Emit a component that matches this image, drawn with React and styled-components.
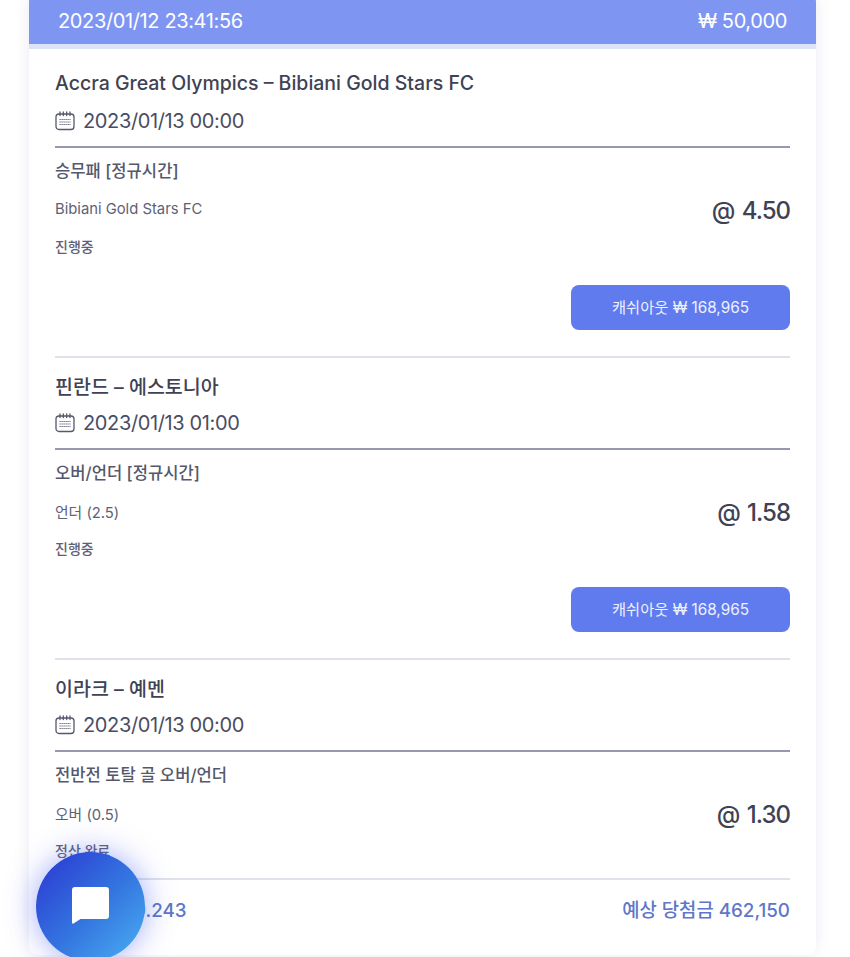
import React from 'react';
import styled, { createGlobalStyle } from 'styled-components';

const GlobalStyle = createGlobalStyle`
    html, body {
        margin: 0;
        height: 957px;
        overflow: hidden;
        background: #fff;
        font-family: Inter, "Noto Sans CJK KR", sans-serif;
        color: #3f4254;
    }
`;

const Page = styled.div`
    box-sizing: border-box;
    height: 957px;
    padding: 0 34px 0 29px;
    overflow: hidden;
`;

const Card = styled.section`
    margin-top: -6px;
    height: 961px;
    box-sizing: border-box;
    background: #fff;
    border-radius: 8px;
    box-shadow: 0 0 16px rgba(60, 70, 130, 0.1);
    overflow: hidden;
    display: flex;
    flex-direction: column;
`;

const Header = styled.header`
    flex: none;
    height: 42px;
    padding: 6px 29px 2px;
    display: flex;
    align-items: center;
    justify-content: space-between;
    background: #7e96f2;
    border-bottom: 5px solid #dde3f6;
    color: #fff;
    font-size: 20px;
    letter-spacing: -0.37px;
    line-height: 1;
`;

const Body = styled.div`
    flex: 1;
    padding: 7px 26px 0;
    display: flex;
    flex-direction: column;
`;

const Bet = styled.article`
    display: flex;
    flex-direction: column;
    border-bottom: 2px solid #dfe1ec;
    height: ${p => p.$height}px;
    box-sizing: border-box;
`;

const Title = styled.h3`
    margin: 0;
    height: 54px;
    display: flex;
    align-items: center;
    font-size: 19.5px;
    font-weight: 500;
    color: #3f4254;
`;

const DateRow = styled.div`
    height: 22px;
    padding-bottom: 14px;
    display: flex;
    align-items: center;
    gap: 8px;
    font-size: 20px;
    letter-spacing: -0.37px;
    color: #4a4d62;
    border-bottom: 2px solid #9698ae;
`;

const Market = styled.div`
    height: 44px;
    display: flex;
    align-items: center;
    font-size: 16.6px;
    font-weight: 500;
    color: #55586c;
`;

const PickRow = styled.div`
    height: 34px;
    display: flex;
    align-items: center;
    justify-content: space-between;
    font-size: 14.8px;
    color: #5e6175;
`;

const Odds = styled.span`
    font-size: 24px;
    font-weight: 500;
    letter-spacing: -1px;
    word-spacing: 2px;
    padding-top: 2px;
    color: #3f4254;
`;

const Status = styled.div`
    height: 40px;
    display: flex;
    align-items: center;
    font-size: 14px;
    font-weight: 500;
    color: #5e6175;
`;

const Actions = styled.div`
    margin-top: 19px;
    display: flex;
    justify-content: flex-end;
`;

const CashOut = styled.button`
    width: 219px;
    height: 45px;
    padding: 0 0 3px;
    border: 0;
    border-radius: 8px;
    background: #5f7bee;
    color: #eef1ff;
    font-family: inherit;
    font-size: 15.3px;
`;

const Footer = styled.footer`
    display: flex;
    align-items: center;
    justify-content: space-between;
    height: 57px;
    padding-bottom: 3px;
    font-size: 18.8px;
    font-weight: 500;
    color: #5f76c9;
`;

const ChatButton = styled.button`
    position: fixed;
    left: 36px;
    top: 852px;
    width: 109px;
    height: 109px;
    padding: 0;
    border: 0;
    border-radius: 50%;
    background: linear-gradient(135deg, #2a35d2 0%, #3477e0 55%, #4bb0f2 100%);
    box-shadow: 0 0 30px rgba(70, 90, 240, 0.5);
    display: flex;
    align-items: center;
    justify-content: center;
`;

const CalendarIcon = () => (
    <svg width="20" height="20" viewBox="0 0 20 20" fill="none" stroke="#55586c" strokeWidth="1.3" strokeLinecap="round">
        <rect x="1" y="3" width="18" height="15.5" rx="3" />
        <path d="M5 1v3.5M8.3 1v3.5M11.7 1v3.5M15 1v3.5" />
        <path d="M4.5 8.5h11M4.5 11h11M4.5 13.5h11" strokeWidth="1.2" strokeLinecap="butt" strokeDasharray="1.2 0.8" />
    </svg>
);

const ChatIcon = () => (
    <svg width="37" height="37" viewBox="0 0 37 37" style={{ marginTop: '-2px' }}>
        <path fill="#fff" d="M3 0h31a3 3 0 0 1 3 3v26a3 3 0 0 1-3 3H8.5L1.5 36.4A1 1 0 0 1 0 35.6V3a3 3 0 0 1 3-3z" />
    </svg>
);

const bets = [
    { id: 1, title: 'Accra Great Olympics – Bibiani Gold Stars FC', date: '2023/01/13 00:00', market: '승무패 [정규시간]', pick: 'Bibiani Gold Stars FC', odds: '@ 4.50', status: '진행중', cashOut: '캐쉬아웃 ₩ 168,965', height: 302 },
    { id: 2, title: '핀란드 – 에스토니아', date: '2023/01/13 01:00', market: '오버/언더 [정규시간]', pick: '언더 (2.5)', odds: '@ 1.58', status: '진행중', cashOut: '캐쉬아웃 ₩ 168,965', height: 302 },
    { id: 3, title: '이라크 – 예멘', date: '2023/01/13 00:00', market: '전반전 토탈 골 오버/언더', pick: '오버 (0.5)', odds: '@ 1.30', status: '정산 완료', height: 220 }
];

export default function App() {
    return (
        <>
            <GlobalStyle />
            <Page>
                <Card>
                    <Header>
                        <span>2023/01/12 23:41:56</span>
                        <span>₩ 50,000</span>
                    </Header>
                    <Body>
                        {bets.map(bet => (
                            <Bet key={bet.id} $height={bet.height}>
                                <Title>{bet.title}</Title>
                                <DateRow><CalendarIcon />{bet.date}</DateRow>
                                <Market>{bet.market}</Market>
                                <PickRow>
                                    <span>{bet.pick}</span>
                                    <Odds>{bet.odds}</Odds>
                                </PickRow>
                                <Status>{bet.status}</Status>
                                {bet.cashOut && (
                                    <Actions>
                                        <CashOut type="button">{bet.cashOut}</CashOut>
                                    </Actions>
                                )}
                            </Bet>
                        ))}
                        <Footer>
                            <span>총 배당률 9.243</span>
                            <span>예상 당첨금 462,150</span>
                        </Footer>
                    </Body>
                </Card>
            </Page>
            <ChatButton type="button" aria-label="chat"><ChatIcon /></ChatButton>
        </>
    );
}
